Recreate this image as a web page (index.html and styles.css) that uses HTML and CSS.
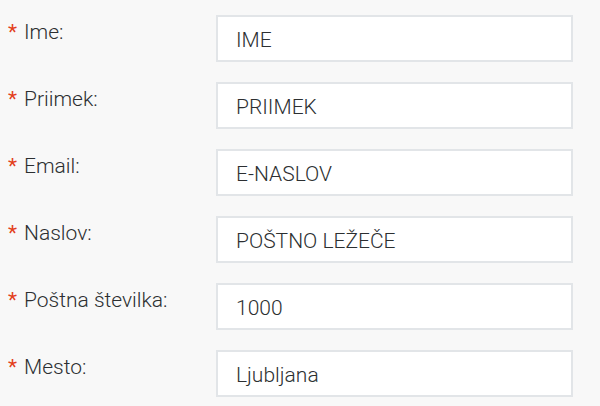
FILE: index.html
```html
<!DOCTYPE html>
<html lang="sl">
<head>
<meta charset="utf-8">
<link rel="stylesheet" href="styles.css">
</head>
<body>
<form class="form">
  <div class="row">
    <label class="label"><span class="req">*</span>Ime:</label>
    <div class="field">IME</div>
  </div>
  <div class="row">
    <label class="label"><span class="req">*</span>Priimek:</label>
    <div class="field">PRIIMEK</div>
  </div>
  <div class="row">
    <label class="label"><span class="req">*</span>Email:</label>
    <div class="field">E-NASLOV</div>
  </div>
  <div class="row">
    <label class="label"><span class="req">*</span>Naslov:</label>
    <div class="field">POŠTNO LEŽEČE</div>
  </div>
  <div class="row">
    <label class="label"><span class="req">*</span>Poštna številka:</label>
    <div class="field">1000</div>
  </div>
  <div class="row">
    <label class="label"><span class="req">*</span>Mesto:</label>
    <div class="field">Ljubljana</div>
  </div>
</form>
</body>
</html>
```
FILE: styles.css
```css
html, body {
  margin: 0;
  padding: 0;
  background: #f8f8f8;
}
body {
  font-family: Roboto, "Noto Sans", sans-serif;
  font-weight: 300;
  color: #2c2f31;
  width: 600px;
  height: 406px;
  overflow: hidden;
}
.form {
  display: flex;
  flex-direction: column;
  gap: 20px;
  padding: 15px 0 0 8px;
}
.row {
  display: flex;
  align-items: flex-start;
}
.label {
  width: 208px;
  font-size: 21px;
  line-height: 24px;
  padding-top: 5px;
}
.req {
  color: #e3411d;
  display: inline-block;
  width: 16px;
  font-weight: 400;
}
.field {
  box-sizing: border-box;
  width: 357px;
  height: 47px;
  border: 2px solid #e2e5e8;
  background: #fff;
  font-size: 21px;
  line-height: 40px;
  padding: 3px 0 0 18px;
}
```
